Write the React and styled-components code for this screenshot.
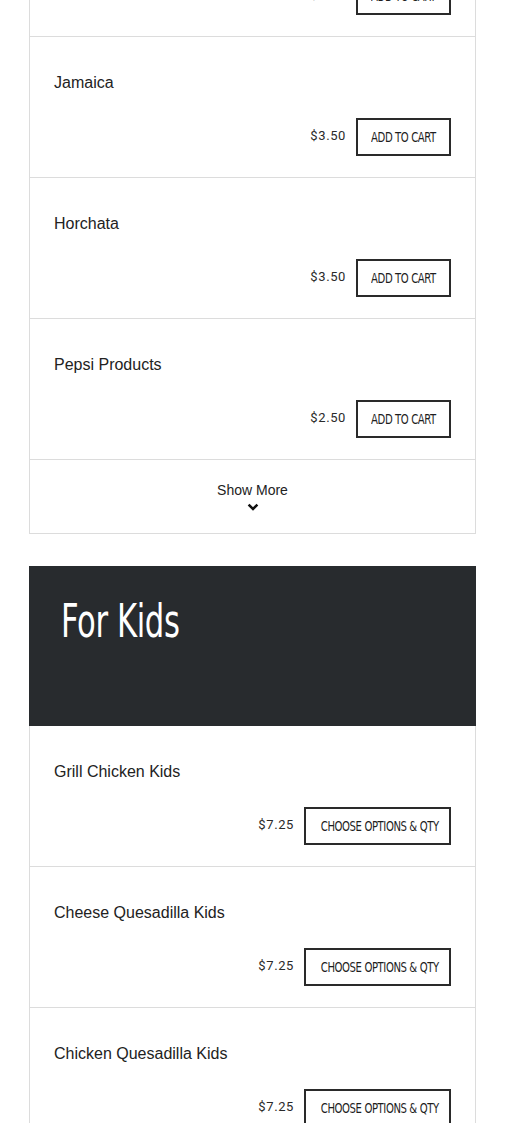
import React from 'react';
import styled, { createGlobalStyle } from 'styled-components';

const GlobalStyle = createGlobalStyle`
  html, body {
    margin: 0;
    padding: 0;
    background: #fff;
  }
  body {
    font-family: "Liberation Sans", Arial, sans-serif;
    color: #222;
  }
`;

const Page = styled.div`
  padding: 0 29px;
  margin-top: -104px;
`;

const Card = styled.div`
  border: 1px solid #dcdcdc;
  border-top: none;
  background: #fff;
`;

const Row = styled.div`
  padding: 36px 24px 21px;
  border-bottom: 1px solid #dcdcdc;
  &:last-child {
    border-bottom: none;
  }
`;

const Name = styled.div`
  font-size: 16px;
  line-height: 20px;
  color: #222;
`;

const Footer = styled.div`
  display: flex;
  justify-content: flex-end;
  align-items: center;
  gap: 10px;
  margin-top: 25px;
`;

const Price = styled.span`
  font-family: Roboto, "Liberation Sans", sans-serif;
  font-size: 13px;
  letter-spacing: 0.6px;
  color: #2a2a2a;
  margin-top: -3px;
`;

const CartButton = styled.button`
  width: ${p => (p.wide ? '147px' : '95px')};
  height: 38px;
  padding: 0;
  border: 2px solid #2a2a2a;
  background: #fff;
  color: #1e1e1e;
  text-transform: uppercase;
  cursor: pointer;
  white-space: nowrap;
  overflow: hidden;
`;

const Label = styled.span`
  display: inline-block;
  font-family: "DejaVu Sans", sans-serif;
  font-stretch: condensed;
  font-size: 14px;
  letter-spacing: -0.5px;
  transform: scaleX(0.8);
`;

const MoreRow = styled.div`
  display: flex;
  flex-direction: column;
  align-items: center;
  padding: 22px 0;
  font-size: 14px;
  line-height: 17px;
  color: #222;
`;

const Chevron = styled.svg`
  width: 12px;
  height: 8px;
  margin-top: 4px;
`;

const Section = styled.div`
  margin-top: 32px;
`;

const Banner = styled.div`
  background: #282b2e;
  height: 160px;
  padding: 29px 32px 0;
  box-sizing: border-box;
`;

const BannerTitle = styled.h2`
  display: inline-block;
  margin: 0;
  color: #fff;
  font-family: "DejaVu Sans", sans-serif;
  font-stretch: condensed;
  font-weight: normal;
  font-size: 46px;
  line-height: 52px;
  letter-spacing: -0.5px;
  transform: scaleX(0.74);
  transform-origin: left center;
`;

const drinks = [
  { name: 'Agua Fresca', price: '$4.00' },
  { name: 'Jamaica', price: '$3.50' },
  { name: 'Horchata', price: '$3.50' },
  { name: 'Pepsi Products', price: '$2.50' },
];

const kids = [
  { name: 'Grill Chicken Kids', price: '$7.25' },
  { name: 'Cheese Quesadilla Kids', price: '$7.25' },
  { name: 'Chicken Quesadilla Kids', price: '$7.25' },
];

function Item({ name, price, options }) {
  return (
    <Row>
      <Name>{name}</Name>
      <Footer>
        <Price>{price}</Price>
        <CartButton wide={options}>
          <Label>{options ? 'Choose Options & Qty' : 'Add to Cart'}</Label>
        </CartButton>
      </Footer>
    </Row>
  );
}

export default function App() {
  return (
    <Page>
      <GlobalStyle />
      <Card>
        {drinks.map(d => (
          <Item key={d.name} {...d} />
        ))}
        <Row as={MoreRow}>
          Show More
          <Chevron viewBox="0 0 12 8">
            <polyline points="1.6,1.6 6,6 10.4,1.6" fill="none" stroke="#111" strokeWidth="2.5" />
          </Chevron>
        </Row>
      </Card>
      <Section>
        <Banner>
          <BannerTitle>For Kids</BannerTitle>
        </Banner>
        <Card>
          {kids.map(k => (
            <Item key={k.name} {...k} options />
          ))}
        </Card>
      </Section>
    </Page>
  );
}
